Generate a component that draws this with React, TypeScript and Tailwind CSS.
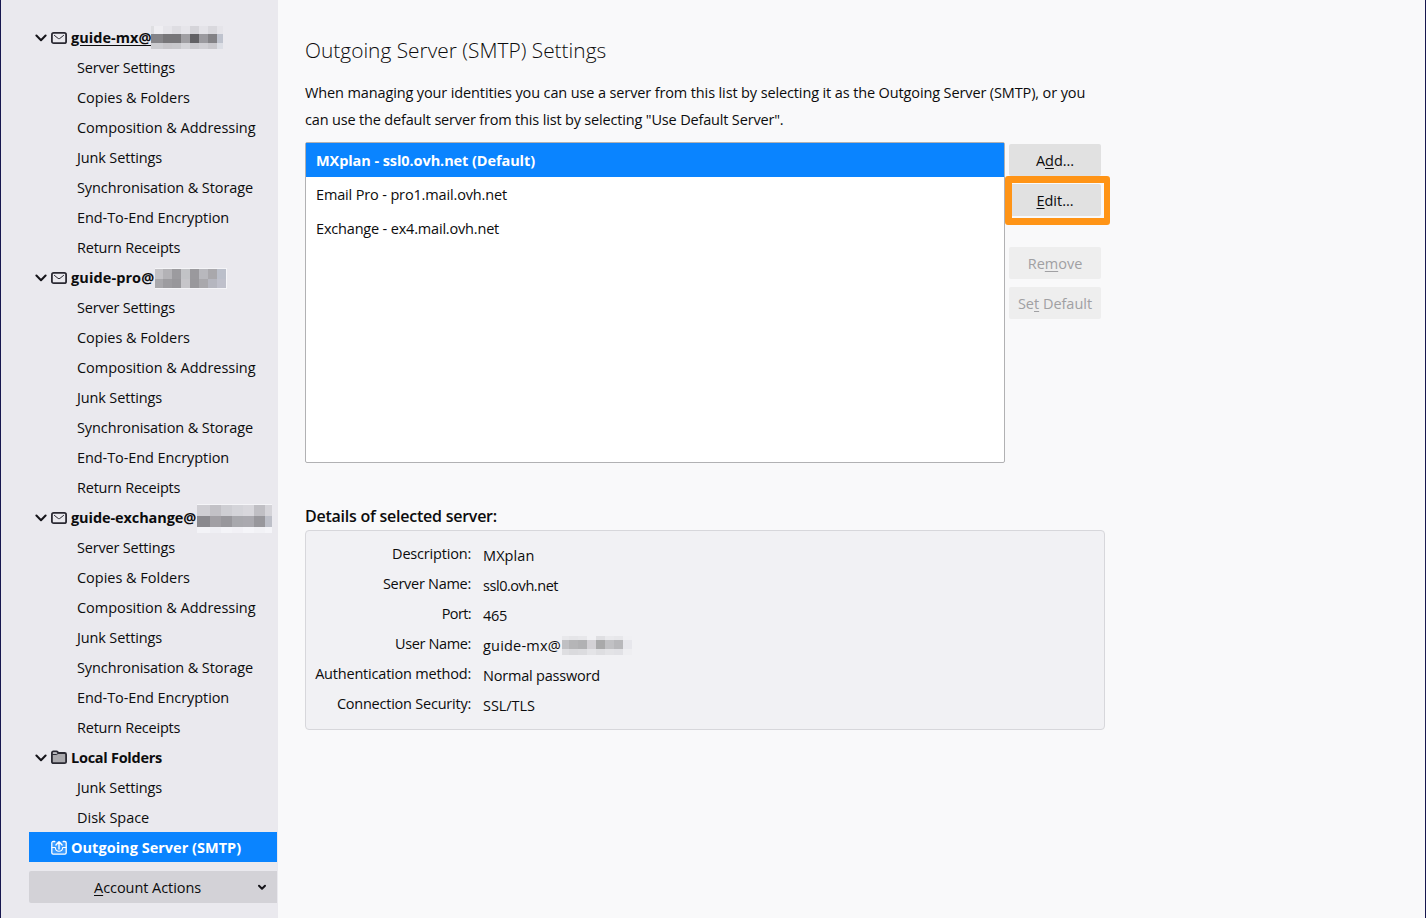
import type { ReactNode } from 'react';

const CHILDREN: [string, string][] = [
  ['Server Settings', 'tracking-[-0.2px]'],
  ['Copies & Folders', 'tracking-[-0.02px]'],
  ['Composition & Addressing', 'tracking-[-0.03px]'],
  ['Junk Settings', 'tracking-[-0.14px]'],
  ['Synchronisation & Storage', 'tracking-[-0.1px]'],
  ['End-To-End Encryption', 'tracking-[-0.08px]'],
  ['Return Receipts', 'tracking-[-0.22px]'],
];

function Mosaic({ rows, heights, columns, className = '' }: { rows: string[][]; heights: string[]; columns: string; className?: string }) {
  return (
    <span className={`block shrink-0 ${className}`}>
      {rows.map((row, r) => (
        <span key={r} className={`grid ${heights[r]} ${columns}`}>
          {row.map((c, i) => <span key={i} className={c} />)}
        </span>
      ))}
    </span>
  );
}

function Chevron() {
  return (
    <svg width="12" height="8" viewBox="0 0 12 8" fill="none" stroke="#15141a" strokeWidth="2" strokeLinecap="round" strokeLinejoin="round" className="shrink-0">
      <path d="M1.4 1.5 6 6.2l4.6-4.7" />
    </svg>
  );
}

function MailIcon() {
  return (
    <svg width="16" height="16" viewBox="0 0 16 16" fill="none" stroke="#2b2a33" strokeLinecap="round" strokeLinejoin="round" className="shrink-0">
      <rect x=".9" y="2.9" width="14.2" height="10.3" rx="1.8" strokeWidth="1.8" />
      <path d="m3.4 5.4 3.6 2.9c.6.5 1.4.5 2 0l3.6-2.9" strokeWidth="1" />
    </svg>
  );
}

function FolderIcon() {
  return (
    <svg width="16" height="16" viewBox="0 0 16 16" fill="none" stroke="#2b2a33" strokeLinejoin="round" strokeLinecap="round" className="shrink-0">
      <path d="M.9 11.700V2.900c0-.9.6-1.500 1.500-1.500h3c.7 0 1.200.5 1.700 1.100l.5.5h6c.9 0 1.500.6 1.500 1.500v7.200c0 .9-.6 1.500-1.500 1.500H2.400c-.9 0-1.500-.6-1.500-1.500Z" fill="#aaa9ad" strokeWidth="1.8" />
      <path d="M1.500 4.500h4.200L7.300 3.200" strokeWidth="1" />
      <path d="M2.500 3h2.600" stroke="#d8d7dc" strokeWidth=".9" />
    </svg>
  );
}

function OutgoingIcon() {
  return (
    <svg width="16" height="16" viewBox="0 0 16 16" fill="none" stroke="#fff" strokeLinecap="round" strokeLinejoin="round" className="shrink-0">
      <rect x="1" y="2.400" width="14" height="12.800" fill="#3a9bff" stroke="none" />
      <path d="M3.800 2.500H2.200c-.8 0-1.400.6-1.400 1.400v9.900c0 .8.6 1.400 1.400 1.400h11.600c.8 0 1.400-.6 1.400-1.400V3.900c0-.8-.6-1.400-1.400-1.400h-1.600" strokeWidth="1.300" />
      <path d="M8 10V3M4.900 6 8 2.800 11.100 6" strokeWidth="1.400" />
      <path d="M1 8.500h3.300M11.700 8.500H15M4.300 8.500c.2 2.300 1.600 3.800 3.700 3.800s3.500-1.500 3.700-3.800" strokeWidth="1.100" />
    </svg>
  );
}

function AccountRow({ icon, label, tracking, children, underline = false }: { icon: ReactNode; label: string; tracking: string; children?: ReactNode; underline?: boolean }) {
  return (
    <div className="flex h-[30px] items-center pl-[34px]">
      <span className="flex items-center gap-1 pt-[2px]">
        <Chevron />
        {icon}
      </span>
      <span className={`ml-1 shrink-0 font-bold ${tracking} ${underline ? 'underline decoration-1 underline-offset-[2px]' : ''}`}>{label}</span>
      {children}
    </div>
  );
}

function ChildRows({ items }: { items: [string, string][] }) {
  return (
    <>
      {items.map(([label, tracking]) => (
        <div key={label} className={`flex h-[30px] items-center pl-[76px] ${tracking}`}>{label}</div>
      ))}
    </>
  );
}

function Sidebar() {
  return (
    <aside className="flex w-[277px] shrink-0 flex-col bg-[#eae9ee] pt-[22px]">
      <AccountRow icon={<MailIcon />} label="guide-mx@" tracking="tracking-[0.04px]" underline>
        <Mosaic
          className="-ml-px"
          columns="grid-cols-[3px_9px_9px_9px_9px_9px_9px_9px_6px]"
          heights={['h-2', 'h-[9px]', 'h-[6px]']}
          rows={[
            ['bg-[#dfdfe2]', 'bg-[#efeef2]', 'bg-[#e6e5ea]', 'bg-[#dedde2]', 'bg-[#e6e5ea]', 'bg-[#d5d4d9]', 'bg-[#e4e3e8]', 'bg-[#d9d8dd]', 'bg-[#e5e4e9]'],
            ['bg-[#858488]', 'bg-[#858488]', 'bg-[#777679]', 'bg-[#777679]', 'bg-[#a09fa3]', 'bg-[#626165]', 'bg-[#9b9a9f]', 'bg-[#838286]', 'bg-[#bfc3ce]'],
            ['bg-[#ccccd0]', 'bg-[#ccccd0]', 'bg-[#c7c6ca]', 'bg-[#c8c8cc]', 'bg-[#d4d4d8]', 'bg-[#cac9ce]', 'bg-[#d0cfd4]', 'bg-[#c9c8cd]', 'bg-[#dcdee5]'],
          ]}
        />
      </AccountRow>
      <ChildRows items={CHILDREN} />
      <AccountRow icon={<MailIcon />} label="guide-pro@" tracking="tracking-[0.1px]">
        <Mosaic
          className="mt-[2px] ml-px border-y border-r border-[#f5f5f8]"
          columns="grid-cols-[8px_9px_9px_9px_9px_9px_9px_9px]"
          heights={['h-[10px]', 'h-[9px]']}
          rows={[
            ['bg-[#c3c2c6]', 'bg-[#b3b2b6]', 'bg-[#9c9b9f]', 'bg-[#c2c3c6]', 'bg-[#9a999d]', 'bg-[#b8b8bd]', 'bg-[#a9a8ac]', 'bg-[#bbbfca]'],
            ['bg-[#a9a8ac]', 'bg-[#9d9ca0]', 'bg-[#98979b]', 'bg-[#c6c5c9]', 'bg-[#99989c]', 'bg-[#a9a8ac]', 'bg-[#b5b6bf]', 'bg-[#bfc0cb]'],
          ]}
        />
      </AccountRow>
      <ChildRows items={CHILDREN} />
      <AccountRow icon={<MailIcon />} label="guide-exchange@" tracking="tracking-[-0.09px]">
        <Mosaic
          className="mt-[2px] ml-px border-t border-[#f5f5f8]"
          columns="grid-cols-[13px_11px_11px_11px_11px_11px_7px]"
          heights={['h-[11px]', 'h-[11px]', 'h-[6px]']}
          rows={[
            ['bg-[#cfced3]', 'bg-[#c2c1c6]', 'bg-[#ceced3]', 'bg-[#d4d4d9]', 'bg-[#d8d7dc]', 'bg-[#c0bfc4]', 'bg-[#d5d4d9]'],
            ['bg-[#8a898e]', 'bg-[#a19fa4]', 'bg-[#98979c]', 'bg-[#a8a8ad]', 'bg-[#aaa9af]', 'bg-[#98979c]', 'bg-[#bdbfc8]'],
            ['bg-[#f3f3f7]', 'bg-[#efeff4]', 'bg-[#f4f4f8]', 'bg-[#f2f1f6]', 'bg-[#f5f5f9]', 'bg-[#f2f2f6]', 'bg-[#f5f5f9]'],
          ]}
        />
      </AccountRow>
      <ChildRows items={CHILDREN} />
      <AccountRow icon={<FolderIcon />} label="Local Folders" tracking="tracking-[-0.27px]" />
      <ChildRows items={[['Junk Settings', 'tracking-[-0.14px]'], ['Disk Space', 'tracking-[-0.02px]']]} />
      <div className="mr-px ml-7 flex h-[30px] shrink-0 items-center bg-[#0a84ff] pl-[22px] text-white">
        <OutgoingIcon />
        <span className="ml-1 font-bold tracking-[0.02px]">Outgoing Server (SMTP)</span>
      </div>
      <button className="mt-[9px] mr-px ml-7 flex h-8 shrink-0 items-center rounded-l-[2px] bg-[#d3d2d7] pr-[10px] pl-[65px]">
        <span className="tracking-[-0.05px]"><u className="underline-offset-2">A</u>ccount Actions</span>
        <svg width="10" height="7" viewBox="0 0 10 7" fill="none" stroke="#15141a" strokeWidth="2" strokeLinecap="round" strokeLinejoin="round" className="ml-auto">
          <path d="M2 1.800 5 4.800l3-3" />
        </svg>
      </button>
    </aside>
  );
}

function ActionButton({ children, disabled = false, className = '' }: { children: ReactNode; disabled?: boolean; className?: string }) {
  return (
    <button disabled={disabled} className={`flex h-8 w-[92px] items-center justify-center rounded-[2px] tracking-[-0.02px] ${disabled ? 'bg-[#eeeeee] text-[#a0a0a3]' : 'bg-[#e1e1e1]'} ${className}`}>
      <span className="whitespace-nowrap">{children}</span>
    </button>
  );
}

function Detail({ label, tracking, children, valueTracking }: { label: string; tracking: string; valueTracking: string; children: ReactNode }) {
  return (
    <div className="flex h-[30px]">
      <span className={`flex h-[30px] w-[165px] items-center justify-end ${tracking}`}>{label}</span>
      <span className={`ml-3 flex h-[30px] items-center pt-1 ${valueTracking}`}>{children}</span>
    </div>
  );
}

export default function App() {
  return (
    <div className="flex h-[918px] w-[1426px] overflow-hidden border-x border-[#17174f] bg-[#f9f9fa] font-['Open_Sans','Noto_Sans',sans-serif] text-[14.5px] leading-[27px] whitespace-nowrap text-[#0c0c0d]">
      <Sidebar />
      <main className="flex w-[832px] flex-col pt-[35px] pl-[27px]">
        <h1 className="h-[30px] text-[20.9px] leading-[30px] font-light">Outgoing Server (SMTP) Settings</h1>
        <div className="mt-[14px] h-[54px]">
          <p className="tracking-[-0.125px]">When managing your identities you can use a server from this list by selecting it as the Outgoing Server (SMTP), or you</p>
          <p className="tracking-[-0.17px]">can use the default server from this list by selecting "Use Default Server".</p>
        </div>
        <div className="mt-[9px] flex">
          <div className="h-[321px] w-[700px] shrink-0 rounded-[2px] border border-[#b1b1b3] bg-white">
            <div className="flex h-[34px] items-center bg-[#0a84ff] pl-[10px] font-bold tracking-[-0.08px] text-white">MXplan - ssl0.ovh.net (Default)</div>
            <div className="flex h-[34px] items-center pl-[10px] tracking-[-0.15px]">Email Pro - pro1.mail.ovh.net</div>
            <div className="flex h-[34px] items-center pl-[10px] tracking-[-0.18px]">Exchange - ex4.mail.ovh.net</div>
          </div>
          <div className="ml-1 flex w-[92px] shrink-0 flex-col pt-[2px]">
            <ActionButton>A<u className="underline-offset-2">d</u>d...</ActionButton>
            <div className="relative mt-2">
              <ActionButton><u className="underline-offset-2">E</u>dit...</ActionButton>
              <span className="absolute -top-2 -left-1 h-[49px] w-[105px] rounded-[3px] border-x-[7px] border-y-[7px] border-r-[6px] border-[#ff9416]" />
            </div>
            <ActionButton disabled className="mt-[31px]">Re<u className="underline-offset-2">m</u>ove</ActionButton>
            <ActionButton disabled className="mt-2">Se<u className="underline-offset-2">t</u> Default</ActionButton>
          </div>
        </div>
        <h2 className="mt-[39px] h-[28px] text-[16px] leading-[28px] font-semibold tracking-[-0.24px]">Details of selected server:</h2>
        <section className="h-[200px] w-[800px] rounded-[4px] border border-[#d7d7db] bg-[#f1f1f4] pt-[7px]">
          <Detail label="Description:" tracking="tracking-[-0.19px]" valueTracking="tracking-[0.1px]">MXplan</Detail>
          <Detail label="Server Name:" tracking="tracking-[-0.28px]" valueTracking="tracking-[-0.45px]">ssl0.ovh.net</Detail>
          <Detail label="Port:" tracking="tracking-[-0.6px]" valueTracking="tracking-[-0.3px]">465</Detail>
          <Detail label="User Name:" tracking="tracking-[-0.37px]" valueTracking="tracking-[0.2px]">
            guide-mx@
            <Mosaic
              className="mt-px ml-px"
              columns="grid-cols-[7px_9px_9px_9px_9px_9px_9px_9px]"
              heights={['h-1', 'h-[9px]', 'h-[6px]']}
              rows={[
                ['bg-[#e8e8eb]', 'bg-[#e5e5e8]', 'bg-[#e7e7ea]', 'bg-[#f1f1f4]', 'bg-[#dfdfe2]', 'bg-[#e9e9ec]', 'bg-[#e7e7ea]', 'bg-[#f0f0f3]'],
                ['bg-[#c0c0c3]', 'bg-[#b5b5b7]', 'bg-[#b1b1b3]', 'bg-[#d3d1d5]', 'bg-[#a9a9aa]', 'bg-[#c1c1c4]', 'bg-[#b8b8bb]', 'bg-[#e7e7ec]'],
                ['bg-[#dedee1]', 'bg-[#dadadd]', 'bg-[#dcdcdf]', 'bg-[#e4e4e7]', 'bg-[#dedee1]', 'bg-[#e3e3e6]', 'bg-[#e1e1e5]', 'bg-[#eeeef1]'],
              ]}
            />
          </Detail>
          <Detail label="Authentication method:" tracking="tracking-[-0.2px]" valueTracking="tracking-[-0.2px]">Normal password</Detail>
          <Detail label="Connection Security:" tracking="tracking-[-0.23px]" valueTracking="tracking-[-0.07px]">SSL/TLS</Detail>
        </section>
      </main>
    </div>
  );
}
